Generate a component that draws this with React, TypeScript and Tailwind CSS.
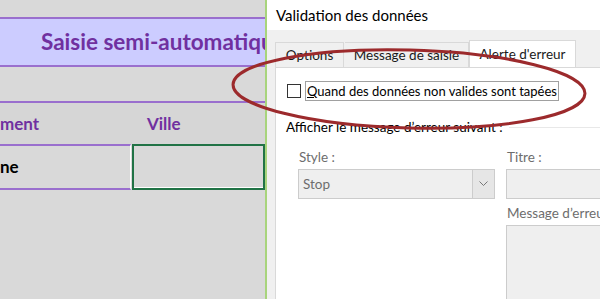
import React from "react";

const ui = { fontFamily: 'Lato, "Noto Sans", sans-serif' };
const xl = { fontFamily: 'Lato, "Open Sans", sans-serif' };

export default function App() {
  return (
    <div className="relative flex h-[299px] w-[600px] overflow-hidden bg-[#d9d9d9]">
      {/* Spreadsheet */}
      <div className="flex w-[265px] shrink-0 flex-col overflow-hidden bg-[#d9d9d9]" style={xl}>
        <div className="h-[17px] shrink-0" />
        <div className="flex h-[50px] shrink-0 items-center border-y-2 border-[#9a6fce] bg-[#ccccff] pl-[41px]">
          <span className="whitespace-nowrap text-[22.5px] font-bold leading-none text-[#7030a0]">Saisie semi-automatique</span>
        </div>
        <div className="h-[34px] shrink-0" />
        <div className="flex h-[43px] shrink-0 items-center border-t-2 border-[#9a6fce] bg-[#d6d6d6]">
          <div className="w-[132px] text-[17px] font-bold text-[#7030a0]">ment</div>
          <div className="pl-[15px] text-[17px] font-bold text-[#7030a0]">Ville</div>
        </div>
        <div className="flex h-[46px] shrink-0">
          <div className="flex w-[131px] items-center border-y-2 border-r border-[#9a6fce] border-r-white text-[17px] font-bold text-black">ne</div>
          <div className="ml-[1px] flex-1 border-2 border-[#217346] shadow-[inset_0_-1px_0_#fff]" />
        </div>
      </div>
      <div className="w-[2px] shrink-0 bg-[#a8d47c]" />

      {/* Dialog */}
      <div className="flex min-w-0 flex-1 flex-col overflow-hidden bg-[#f0f0f0]" style={ui}>
        <div className="flex h-[30px] shrink-0 items-center bg-white pl-[9px] text-[15px] text-black">Validation des données</div>
        <div className="flex min-h-0 flex-1 flex-col pl-[8px] pt-[10px]">
          <div className="flex h-[27px] shrink-0 items-end text-[13.5px] text-[#1a1a1a]">
            <div className="flex h-[25px] w-[69px] items-center justify-center border border-b-0 border-[#d9d9d9]">Options</div>
            <div className="ml-[1px] flex h-[25px] w-[124px] items-center justify-center border border-b-0 border-l-0 border-[#d9d9d9]">Message de saisie</div>
            <div className="flex h-[27px] w-[107px] items-center justify-center border border-b-0 border-[#d9d9d9] bg-white">Alerte d'erreur</div>
          </div>
          <div className="min-h-0 flex-1 border-l border-t border-[#d9d9d9] bg-white text-[13.5px] leading-[19px]">
            <div className="flex items-center pl-[11px] pt-[13px]">
              <div className="h-[14px] w-[14px] border border-[#333]" />
              <div className="ml-[4px] flex h-[20px] items-center border border-[#a0a0a0] px-[1px] text-[13px] text-black">
                <span><span className="underline">Q</span>uand des données non valides sont tapées</span>
              </div>
            </div>
            <div className="mt-[17px] flex h-[19px] items-center pl-[10px] text-black">
              <span className="whitespace-nowrap">Afficher le message d’erreur suivant :</span>
              <div className="ml-[6px] h-px flex-1 bg-[#e8e8e8]" />
            </div>
            <div className="mt-[11px] flex pl-[22px] text-[#6d6d6d]">
              <div className="w-[208px] shrink-0">
                <div className="h-[19px] pl-[1px]">Style :</div>
                <div className="mt-[2px] flex h-[30px] w-[197px] border border-[#cccccc] bg-[#efefef]">
                  <div className="flex flex-1 items-center pl-[4px]">Stop</div>
                  <div className="flex w-[22px] items-center justify-center border-l border-[#cccccc] bg-[#e6e6e6]">
                    <svg width="9" height="6" viewBox="0 0 9 6"><path d="M0.5 0.5 L4.5 4.5 L8.5 0.5" fill="none" stroke="#777" strokeWidth="1" /></svg>
                  </div>
                </div>
              </div>
              <div className="min-w-0 flex-1">
                <div className="h-[19px] pl-[1px]">Titre :</div>
                <div className="mt-[2px] h-[30px] border border-r-0 border-[#cccccc] bg-[#efefef]" />
                <div className="mt-[5px] h-[19px] whitespace-nowrap pl-[1px]">Message d’erreur</div>
                <div className="mt-[2px] h-[80px] border border-r-0 border-[#cccccc] bg-[#efefef]" />
              </div>
            </div>
          </div>
        </div>
      </div>

      {/* Red annotation ellipse */}
      <svg className="pointer-events-none absolute left-0 top-0" width="600" height="299" viewBox="0 0 600 299">
        <ellipse cx="409" cy="89" rx="176" ry="39" transform="rotate(1.5 409 89)" fill="none" stroke="#9c2a2c" strokeWidth="3" />
      </svg>
    </div>
  );
}
